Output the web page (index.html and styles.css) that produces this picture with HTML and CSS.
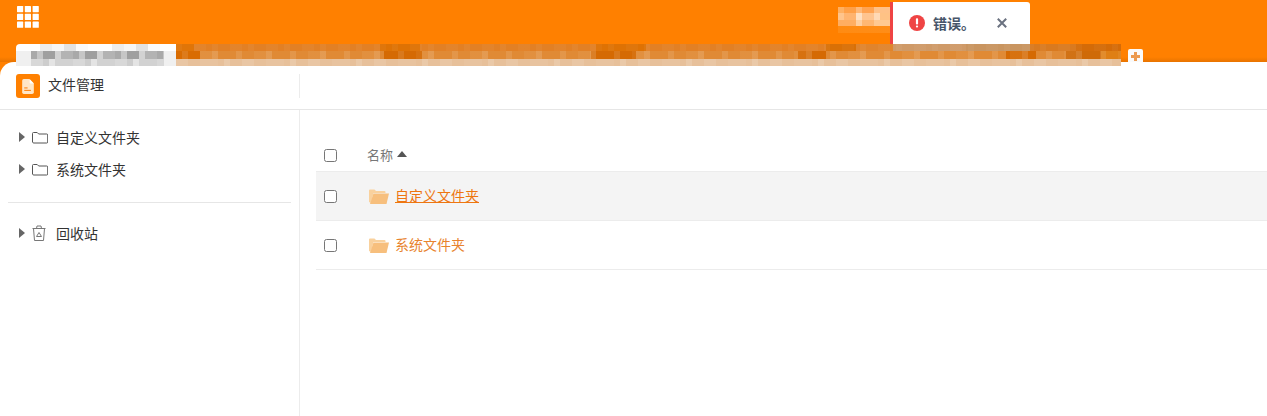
FILE: index.html
```html
<!DOCTYPE html>
<html lang="zh">
<head>
<meta charset="utf-8">
<title>文件管理</title>
<link rel="stylesheet" href="styles.css">
</head>
<body>
<header class="topbar">
  <div class="top-row">
    <svg class="apps" width="22" height="22" viewBox="0 0 22 22" fill="#fff">
      <rect x="0" y="0" width="6.2" height="6.2" rx=".6"/><rect x="7.8" y="0" width="6.2" height="6.2" rx=".6"/><rect x="15.6" y="0" width="6.2" height="6.2" rx=".6"/>
      <rect x="0" y="7.8" width="6.2" height="6.2" rx=".6"/><rect x="7.8" y="7.8" width="6.2" height="6.2" rx=".6"/><rect x="15.6" y="7.8" width="6.2" height="6.2" rx=".6"/>
      <rect x="0" y="15.6" width="6.2" height="6.2" rx=".6"/><rect x="7.8" y="15.6" width="6.2" height="6.2" rx=".6"/><rect x="15.6" y="15.6" width="6.2" height="6.2" rx=".6"/>
    </svg>
    <div class="user-blur"></div>
  </div>
  <div class="tab-row">
    <div class="tab-active"></div>
    <div class="tab-strip"><i class="m-top"></i><i class="m-mid"></i><i class="m-low"></i></div>
    <div class="tab-add"><span class="plus"></span></div>
  </div>
  <div class="toast">
    <svg class="toast-icon" width="16" height="16" viewBox="0 0 16 16">
      <circle cx="8" cy="8" r="8" fill="#ef4444"/>
      <rect x="6.9" y="3.2" width="2.2" height="6.2" rx=".9" fill="#fff"/>
      <rect x="6.9" y="10.4" width="2.2" height="2.2" rx="1" fill="#fff"/>
    </svg>
    <span class="toast-text">错误。</span>
    <svg class="toast-close" width="10" height="10" viewBox="0 0 10 10" fill="none" stroke="#6b7280" stroke-width="2">
      <path d="M.8.8l8.4 8.4M9.2.8L.8 9.2"/>
    </svg>
  </div>
</header>
<section class="panel">
  <div class="panel-head">
    <div class="app-title">
      <span class="app-icon">
        <svg width="12" height="15" viewBox="0 0 14 18">
          <path d="M2 0h6.500L14 5.500V16a2 2 0 0 1-2 2H2a2 2 0 0 1-2-2V2a2 2 0 0 1 2-2z" fill="#ffe6c7"/>
          <path d="M9 0l5 5.500H10a1 1 0 0 1-1-1z" fill="#fff"/>
          <rect x="2.500" y="10" width="4" height="1.400" fill="#ff8a1f"/>
          <rect x="2.500" y="13" width="8" height="1.400" fill="#ff8a1f"/>
        </svg>
      </span>
      <span class="app-name">文件管理</span>
    </div>
  </div>
  <div class="panel-body">
    <aside class="sidebar">
      <ul class="tree">
        <li class="tree-item"><span class="caret"></span>
          <svg class="tree-icon" width="16" height="12" viewBox="0 0 16 12" fill="none" stroke="#555"><path d="M.5 10V1.500a1 1 0 0 1 1-1h3.700l1.500 1.500h8a1 1 0 0 1 1 1V10a1 1 0 0 1-1 1h-13a1 1 0 0 1-1-1z"/></svg>
          <span class="tree-label">自定义文件夹</span></li>
        <li class="tree-item"><span class="caret"></span>
          <svg class="tree-icon" width="16" height="12" viewBox="0 0 16 12" fill="none" stroke="#555"><path d="M.5 10V1.500a1 1 0 0 1 1-1h3.700l1.500 1.500h8a1 1 0 0 1 1 1V10a1 1 0 0 1-1 1h-13a1 1 0 0 1-1-1z"/></svg>
          <span class="tree-label">系统文件夹</span></li>
      </ul>
      <hr class="side-rule">
      <ul class="tree">
        <li class="tree-item"><span class="caret"></span>
          <svg class="tree-icon trash" width="14" height="16" viewBox="0 0 14 16" fill="none" stroke="#777"><path d="M.5 3.500h13M4.500 3.500L5 1h4l.5 2.500M1.500 3.500L2.500 15.500h9L12.500 3.500M7 7.500l-2.500 4h5z"/></svg>
          <span class="tree-label trash-label">回收站</span></li>
      </ul>
    </aside>
    <main class="main">
      <div class="row row-head">
        <input type="checkbox" class="check">
        <span class="head-name">名称</span><span class="sort-up"></span>
      </div>
      <div class="row row-file row-hover">
        <input type="checkbox" class="check">
        <svg class="file-folder" width="20" height="15" viewBox="0 0 20 15"><path d="M0 1.500A1 1 0 0 1 1 .5h4.500l1.500 1.500h8.500a1 1 0 0 1 1 1V4H4.500L2 14 0 13z" fill="#f9d19d"/><path d="M4.500 4.500H20L17.500 15H1z" fill="#f7bf7d"/></svg>
        <a class="file-link link-active" href="#">自定义文件夹</a>
      </div>
      <div class="row row-file">
        <input type="checkbox" class="check">
        <svg class="file-folder" width="20" height="15" viewBox="0 0 20 15"><path d="M0 1.500A1 1 0 0 1 1 .5h4.500l1.500 1.500h8.500a1 1 0 0 1 1 1V4H4.500L2 14 0 13z" fill="#f9d19d"/><path d="M4.500 4.500H20L17.500 15H1z" fill="#f7bf7d"/></svg>
        <a class="file-link" href="#">系统文件夹</a>
      </div>
    </main>
  </div>
</section>
</body>
</html>
```
FILE: styles.css
```css
* { box-sizing: border-box; }
html, body { margin: 0; padding: 0; }
body {
  width: 1267px;
  height: 416px;
  overflow: hidden;
  background: linear-gradient(#ff8000 0 80px, #fff 80px);
  font-family: "Noto Sans CJK SC", "Liberation Sans", sans-serif;
  font-size: 14px;
  color: #333;
}
ul { list-style: none; margin: 0; padding: 0; }

.topbar {
  position: relative;
  height: 62px;
  background: linear-gradient(#ff8000 0 57px, #e87400 62px);
  z-index: 2;
}
.top-row {
  display: flex;
  height: 44px;
  padding: 6px 0 0 17px;
}
.apps { display: block; }
.user-blur {
  width: 53px;
  height: 26px;
  margin: 1px 0 0 799px;
  background:
    linear-gradient(90deg, #ffb062 0 6px, #ffa048 6px 18px, #ffb877 18px 24px, #ffa352 24px 36px, #ffc188 36px 53px) 0 0 / 100% 6px no-repeat,
    linear-gradient(90deg, #ffc48c 0 6px, #ffb470 6px 18px, #ffe0c2 18px 24px, #ffc48f 24px 36px, #ffd9b5 36px 42px, #ffc285 42px 53px) 0 6px / 100% 7px no-repeat,
    linear-gradient(90deg, #ffae62 0 18px, #ffcf9f 18px 24px, #ffb772 24px 36px, #ffc992 36px 53px) 0 13px / 100% 6px no-repeat,
    linear-gradient(90deg, #ff8b12, #ff8d18) 0 19px / 100% 7px no-repeat;
}
.tab-row {
  display: flex;
  height: 22px;
  position: relative;
  z-index: 2;
}
.tab-active {
  width: 160px;
  margin-left: 16px;
  border-radius: 4px 0 0 0;
  background:
    repeating-linear-gradient(90deg, #fff 0 24px, #ededed 24px 36px, #f6f6f6 36px 48px, #e2e2e2 48px 60px, #fafafa 60px 72px) 0 0 / 100% 7px no-repeat,
    linear-gradient(#f0f0f0, #f0f0f0) 0 7px / 100% 15px no-repeat;
  position: relative;
  overflow: hidden;
}
.tab-active::before {
  content: "";
  position: absolute;
  left: 15px;
  right: 12px;
  top: 7px;
  height: 8px;
  background: repeating-linear-gradient(90deg, #a9a9a9 0 6px, #c6c6c6 6px 12px, #9f9f9f 12px 24px, #d2d2d2 24px 30px, #b3b3b3 30px 42px);
}
.tab-active::after {
  content: "";
  position: absolute;
  left: 15px;
  right: 12px;
  top: 15px;
  height: 7px;
  background: repeating-linear-gradient(90deg, #d8d8d8 0 12px, #cdcdcd 12px 18px, #e4e4e4 18px 24px, #d2d2d2 24px 42px);
}
.tab-strip {
  width: 945px;
  height: 22px;
  display: flex;
  flex-direction: column;
}
.tab-strip i { display: block; }
.m-top {
  height: 7px;
  background:
    repeating-linear-gradient(90deg, rgba(255,255,255,.04) 0 6px, transparent 6px 18px, rgba(255,255,255,.03) 18px 30px, transparent 30px 36px),
    linear-gradient(90deg, #e07508 0 18px, #e28025 18px 204px, #de7204 204px 244px, #e28025 244px 420px, #de7204 420px 470px, #e28025 470px 650px, #d97006 650px 680px, #e0842d 680px 717px, #cf9a68 717px 790px, #c99560 790px 854px, #d97a20 854px 900px, #d46b08 900px 945px);
}
.m-mid {
  height: 8px;
  background:
    repeating-linear-gradient(90deg, transparent 0 6px, rgba(255,255,255,.1) 6px 12px, transparent 12px 24px, rgba(255,255,255,.05) 24px 36px, rgba(255,255,255,.14) 36px 42px, transparent 42px 54px),
    linear-gradient(90deg, #d96c02 0 24px, #e08a35 24px 208px, #d56a03 208px 246px, #e08a35 246px 415px, #d56a03 415px 460px, #e08a35 460px 622px, #d56a03 622px 650px, #e08a35 650px 830px, #d56a03 830px 860px, #e08a35 860px 890px, #cf6a08 890px 925px, #df7f15 925px);
}
.m-low {
  height: 7px;
  background:
    repeating-linear-gradient(90deg, rgba(255,255,255,.1) 0 12px, transparent 12px 24px, rgba(255,255,255,.05) 24px 42px, transparent 42px 48px, rgba(255,255,255,.14) 48px 54px, transparent 54px 66px),
    #e7c09a;
}
.tab-add {
  width: 15px;
  height: 13px;
  margin: 5px 0 0 7px;
  background: #fafafa;
  border-radius: 2px 2px 0 0;
  position: relative;
}
.plus {
  position: absolute;
  left: 3px;
  top: 3px;
  width: 9px;
  height: 9px;
  background:
    linear-gradient(#ec9a50, #ec9a50) center / 3px 9px no-repeat,
    linear-gradient(#ec9a50, #ec9a50) center / 9px 3px no-repeat;
}
.toast {
  position: absolute;
  left: 890px;
  top: 2px;
  width: 140px;
  height: 42px;
  background: #fff;
  border-left: 3px solid #ef4444;
  border-radius: 0 3px 0 0;
  display: flex;
  align-items: center;
  padding-left: 16px;
}
.toast-text {
  margin-left: 8px;
  font-size: 14px;
  font-weight: 700;
  color: #475569;
}
.toast-close { margin-left: 22px; }

.panel {
  position: relative;
  height: 354px;
  background: #fff;
  border-radius: 14px 0 0 0;
  z-index: 1;
}
.panel-head {
  height: 48px;
  padding-top: 12px;
  border-bottom: 1px solid #e6e6e6;
}
.app-title {
  width: 300px;
  height: 24px;
  padding-left: 16px;
  display: flex;
  align-items: center;
  border-right: 1px solid #ececec;
  gap: 8px;
  line-height: 24px;
}
.app-name { padding-bottom: 4px; }
.app-icon {
  width: 24px;
  height: 24px;
  border-radius: 3px;
  background: #ff8000;
  display: flex;
  align-items: center;
  justify-content: center;
}
.panel-body {
  display: flex;
  height: 306px;
}
.sidebar {
  width: 300px;
  flex: none;
  border-right: 1px solid #ececec;
  padding: 12px 8px 0;
}
.tree-item {
  height: 32px;
  display: flex;
  align-items: center;
  padding-left: 11px;
}
.caret {
  width: 0;
  height: 0;
  border-left: 6px solid #666;
  border-top: 5px solid transparent;
  border-bottom: 5px solid transparent;
  margin-top: -2px;
}
.tree-icon { margin-left: 7px; flex: none; }
.trash { margin-top: -2px; }
.tree-label { margin-left: 8px; padding-bottom: 2px; }
.trash-label { margin-left: 10px; }
.side-rule {
  border: 0;
  border-top: 1px solid #e6e6e6;
  margin: 16px 0 15px;
}
.main {
  flex: 1;
  padding: 29px 0 0 16px;
}
.row {
  display: flex;
  align-items: center;
  padding-left: 8px;
  border-bottom: 1px solid #ececec;
}
.check { margin: 0; width: 13px; height: 13px; flex: none; }
.row-head {
  height: 33px;
  font-size: 13px;
  color: #777;
}
.head-name { margin-left: 30px; padding-bottom: 2px; }
.sort-up {
  width: 0;
  height: 0;
  margin: 0 0 2px 4px;
  border-left: 5px solid transparent;
  border-right: 5px solid transparent;
  border-bottom: 6px solid #555;
}
.row-file { height: 49px; }
.row-hover { background: #f4f4f4; }
.file-folder { margin-left: 32px; flex: none; }
.file-link {
  margin-left: 6px;
  padding-bottom: 2px;
  color: #e8832e;
  text-decoration: none;
}
.link-active {
  color: #ee7610;
  text-decoration: underline;
}
```
